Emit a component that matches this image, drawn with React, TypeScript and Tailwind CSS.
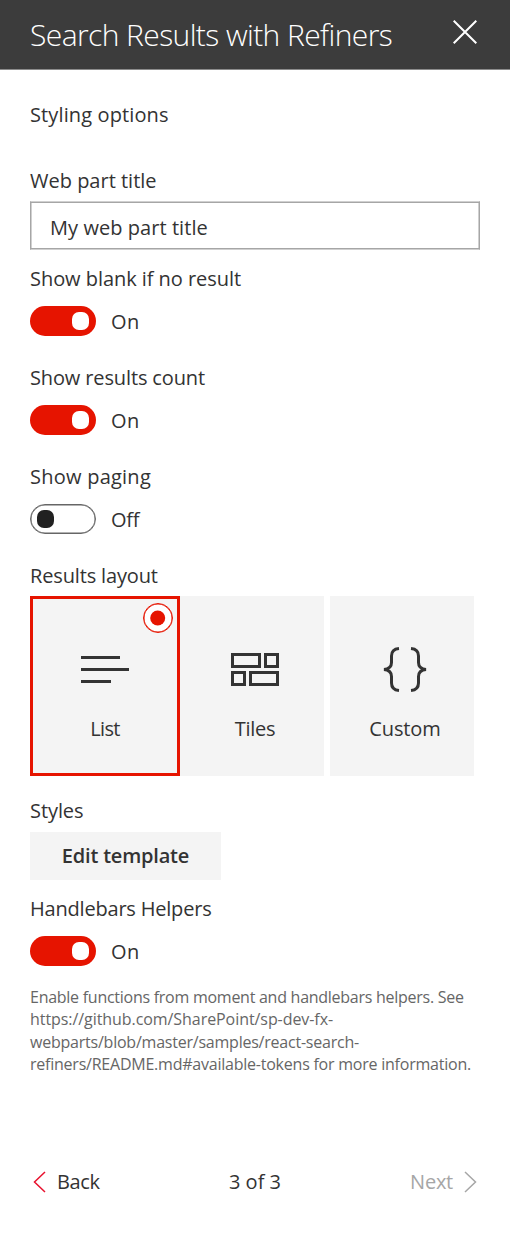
import type { ReactNode } from "react";

function Label({ children, className = "" }: { children: ReactNode; className?: string }) {
  return <div className={`h-7 leading-7 whitespace-nowrap ${className}`}>{children}</div>;
}

function Toggle({ on }: { on: boolean }) {
  return (
    <div className="mt-[13px] flex h-[30px] items-center">
      <button
        role="switch"
        aria-checked={on}
        className={
          on
            ? "flex h-[30px] w-[66px] items-center justify-end rounded-full bg-[#e61400] pr-[7px]"
            : "flex h-[30px] w-[66px] items-center justify-start rounded-full border border-[#666] bg-white pl-[6px] shadow-[inset_0_0_0_0.5px_#666]"
        }
      >
        <span className={on ? "h-[18px] w-[17px] rounded-[7px] bg-white" : "h-[18px] w-[17px] rounded-[7px] bg-[#212121]"} />
      </button>
      <span className={on ? "mt-0.5 ml-[15px] leading-7 tracking-[0.4px]" : "mt-0.5 ml-[15px] leading-7 tracking-[-0.3px]"}>
        {on ? "On" : "Off"}
      </span>
    </div>
  );
}

function ListIcon() {
  return (
    <svg width="48" height="48" viewBox="0 0 48 48" fill="none" stroke="#333" strokeWidth="3">
      <path d="M0 12.5H39M0 24.5H48M0 36.5H30" />
    </svg>
  );
}

function TilesIcon() {
  return (
    <svg width="48" height="48" viewBox="0 0 48 48" fill="none" stroke="#333" strokeWidth="3">
      <path d="M1.5 9.5H28.5V21.5H1.5ZM34.5 9.5H46.5V21.5H34.5ZM1.5 27.5H13.5V39.5H1.5ZM19.5 27.5H46.5V39.5H19.5Z" />
    </svg>
  );
}

function BracesIcon() {
  return (
    <svg width="48" height="48" viewBox="0 0 48 48" fill="none" stroke="#333" strokeWidth="3">
      <path d="M18 3.5C12.5 4 10.5 7 10.5 11V17.500C10.5 21.5 8 24 3 24.5C8 25 10.5 27.500 10.5 31.500V38C10.500 42 12.5 45 18 45.5" />
      <path d="M30 3.5C35.500 4 37.5 7 37.5 11V17.500C37.5 21.5 40 24 45 24.5C40 25 37.5 27.500 37.5 31.500V38C37.500 42 35.500 45 30 45.5" />
    </svg>
  );
}

function LayoutTile({ icon, label, selected = false }: { icon: ReactNode; label: ReactNode; selected?: boolean }) {
  return (
    <div
      className={
        selected
          ? "relative flex h-[180px] w-[150px] flex-col items-center border-[3px] border-[#e61400] bg-[#f4f4f4] pt-[46px]"
          : "flex h-[180px] w-[144px] flex-col items-center bg-[#f4f4f4] pt-[49px] pl-1.5"
      }
    >
      {selected && (
        <span className="absolute top-1 right-1 flex size-[30px] items-center justify-center rounded-full border border-[#e61400] bg-white shadow-[inset_0_0_0_0.5px_#e61400]">
          <svg width="16" height="16" viewBox="0 0 16 16">
            <circle cx="7.700" cy="8" r="7.500" fill="#e61400" />
          </svg>
        </span>
      )}
      {icon}
      <span className="mt-[22px] leading-7">{label}</span>
    </div>
  );
}

export default function App() {
  return (
    <div className="flex h-[1233px] w-[510px] flex-col bg-white font-['Open_Sans','Noto_Sans',sans-serif] text-[20px] text-[#333]">
      <header className="flex h-[70px] shrink-0 items-start justify-between border-b border-[#8c8c8c] bg-[#3c3c3c] pr-[33px] pl-[30px] text-white">
        <h1 className="mt-3.5 text-[30px] leading-[42px] font-light tracking-[-0.59px] whitespace-nowrap">
          Search Results with Refiners
        </h1>
        <svg className="mt-5" width="24" height="24" viewBox="0 0 24 24" fill="none" stroke="currentColor" strokeWidth="2">
          <path d="M.7 .7L23.300 23.300M23.300 .7L.7 23.300" />
        </svg>
      </header>

      <main className="flex flex-col px-[30px] pt-[31px]">
        <Label className="tracking-[0.12px]">Styling options</Label>
        <Label className="mt-[38px]">Web part title</Label>
        <div className="mt-1.5 flex h-[49px] items-center border border-x-[#a6a6a6] border-y-[#d0d0d0] pt-1 pl-[19px] leading-7 tracking-[0.06px] shadow-[inset_0_1px_#a6a6a6,inset_0_-1px_#a6a6a6,inset_1px_0_#d0d0d0,inset_-1px_0_#d0d0d0]">
          My web part title
        </div>
        <Label className="mt-[15px] tracking-[-0.05px]">Show blank if no result</Label>
        <Toggle on />
        <Label className="mt-7 tracking-[-0.13px]">Show results count</Label>
        <Toggle on />
        <Label className="mt-7 tracking-[0.24px]">Show paging</Label>
        <Toggle on={false} />
        <Label className="mt-7 tracking-[-0.15px]">Results layout</Label>
        <div className="mt-1.5 flex">
          <LayoutTile selected icon={<ListIcon />} label={<span className="tracking-[-0.6px]">List</span>} />
          <LayoutTile icon={<TilesIcon />} label={<span className="tracking-[-0.3px]">Tiles</span>} />
          <div className="ml-1.5">
            <LayoutTile icon={<BracesIcon />} label={<span className="tracking-[-0.1px]">Custom</span>} />
          </div>
        </div>
        <Label className="mt-[21px] tracking-[-0.08px]">Styles</Label>
        <button className="mt-[7px] flex h-12 w-[191px] items-center justify-center bg-[#f4f4f4] leading-7 font-semibold tracking-[-0.2px]">
          Edit template
        </button>
        <Label className="mt-[15px] tracking-[-0.2px]">Handlebars Helpers</Label>
        <Toggle on />
        <p className="mt-5 text-[16px] leading-[22.4px] whitespace-nowrap text-[#666]">
          <span className="block tracking-[-0.263px]">Enable functions from moment and handlebars helpers. See</span>
          <span className="block tracking-[-0.064px]">https://github.com/SharePoint/sp-dev-fx-</span>
          <span className="block tracking-[-0.224px]">webparts/blob/master/samples/react-search-</span>
          <span className="block tracking-[-0.229px]">refiners/README.md#available-tokens for more information.</span>
        </p>
      </main>

      <footer className="mt-[92px] grid grid-cols-3 items-center px-[33px] leading-7">
        <div className="flex items-center gap-[11px]">
          <svg width="13" height="22" viewBox="0 0 13 22" fill="none" stroke="#e8112d" strokeWidth="1.5">
            <path d="M12 1L1.500 11L12 21" />
          </svg>
          <span className="tracking-[-0.4px]">Back</span>
        </div>
        <span className="text-center">3 of 3</span>
        <div className="flex items-center justify-end gap-[11px] text-[#a6a6a6]">
          <span className="tracking-[-0.25px]">Next</span>
          <svg width="13" height="22" viewBox="0 0 13 22" fill="none" stroke="currentColor" strokeWidth="1.5">
            <path d="M1 1L11.500 11L1 21" />
          </svg>
        </div>
      </footer>
    </div>
  );
}
